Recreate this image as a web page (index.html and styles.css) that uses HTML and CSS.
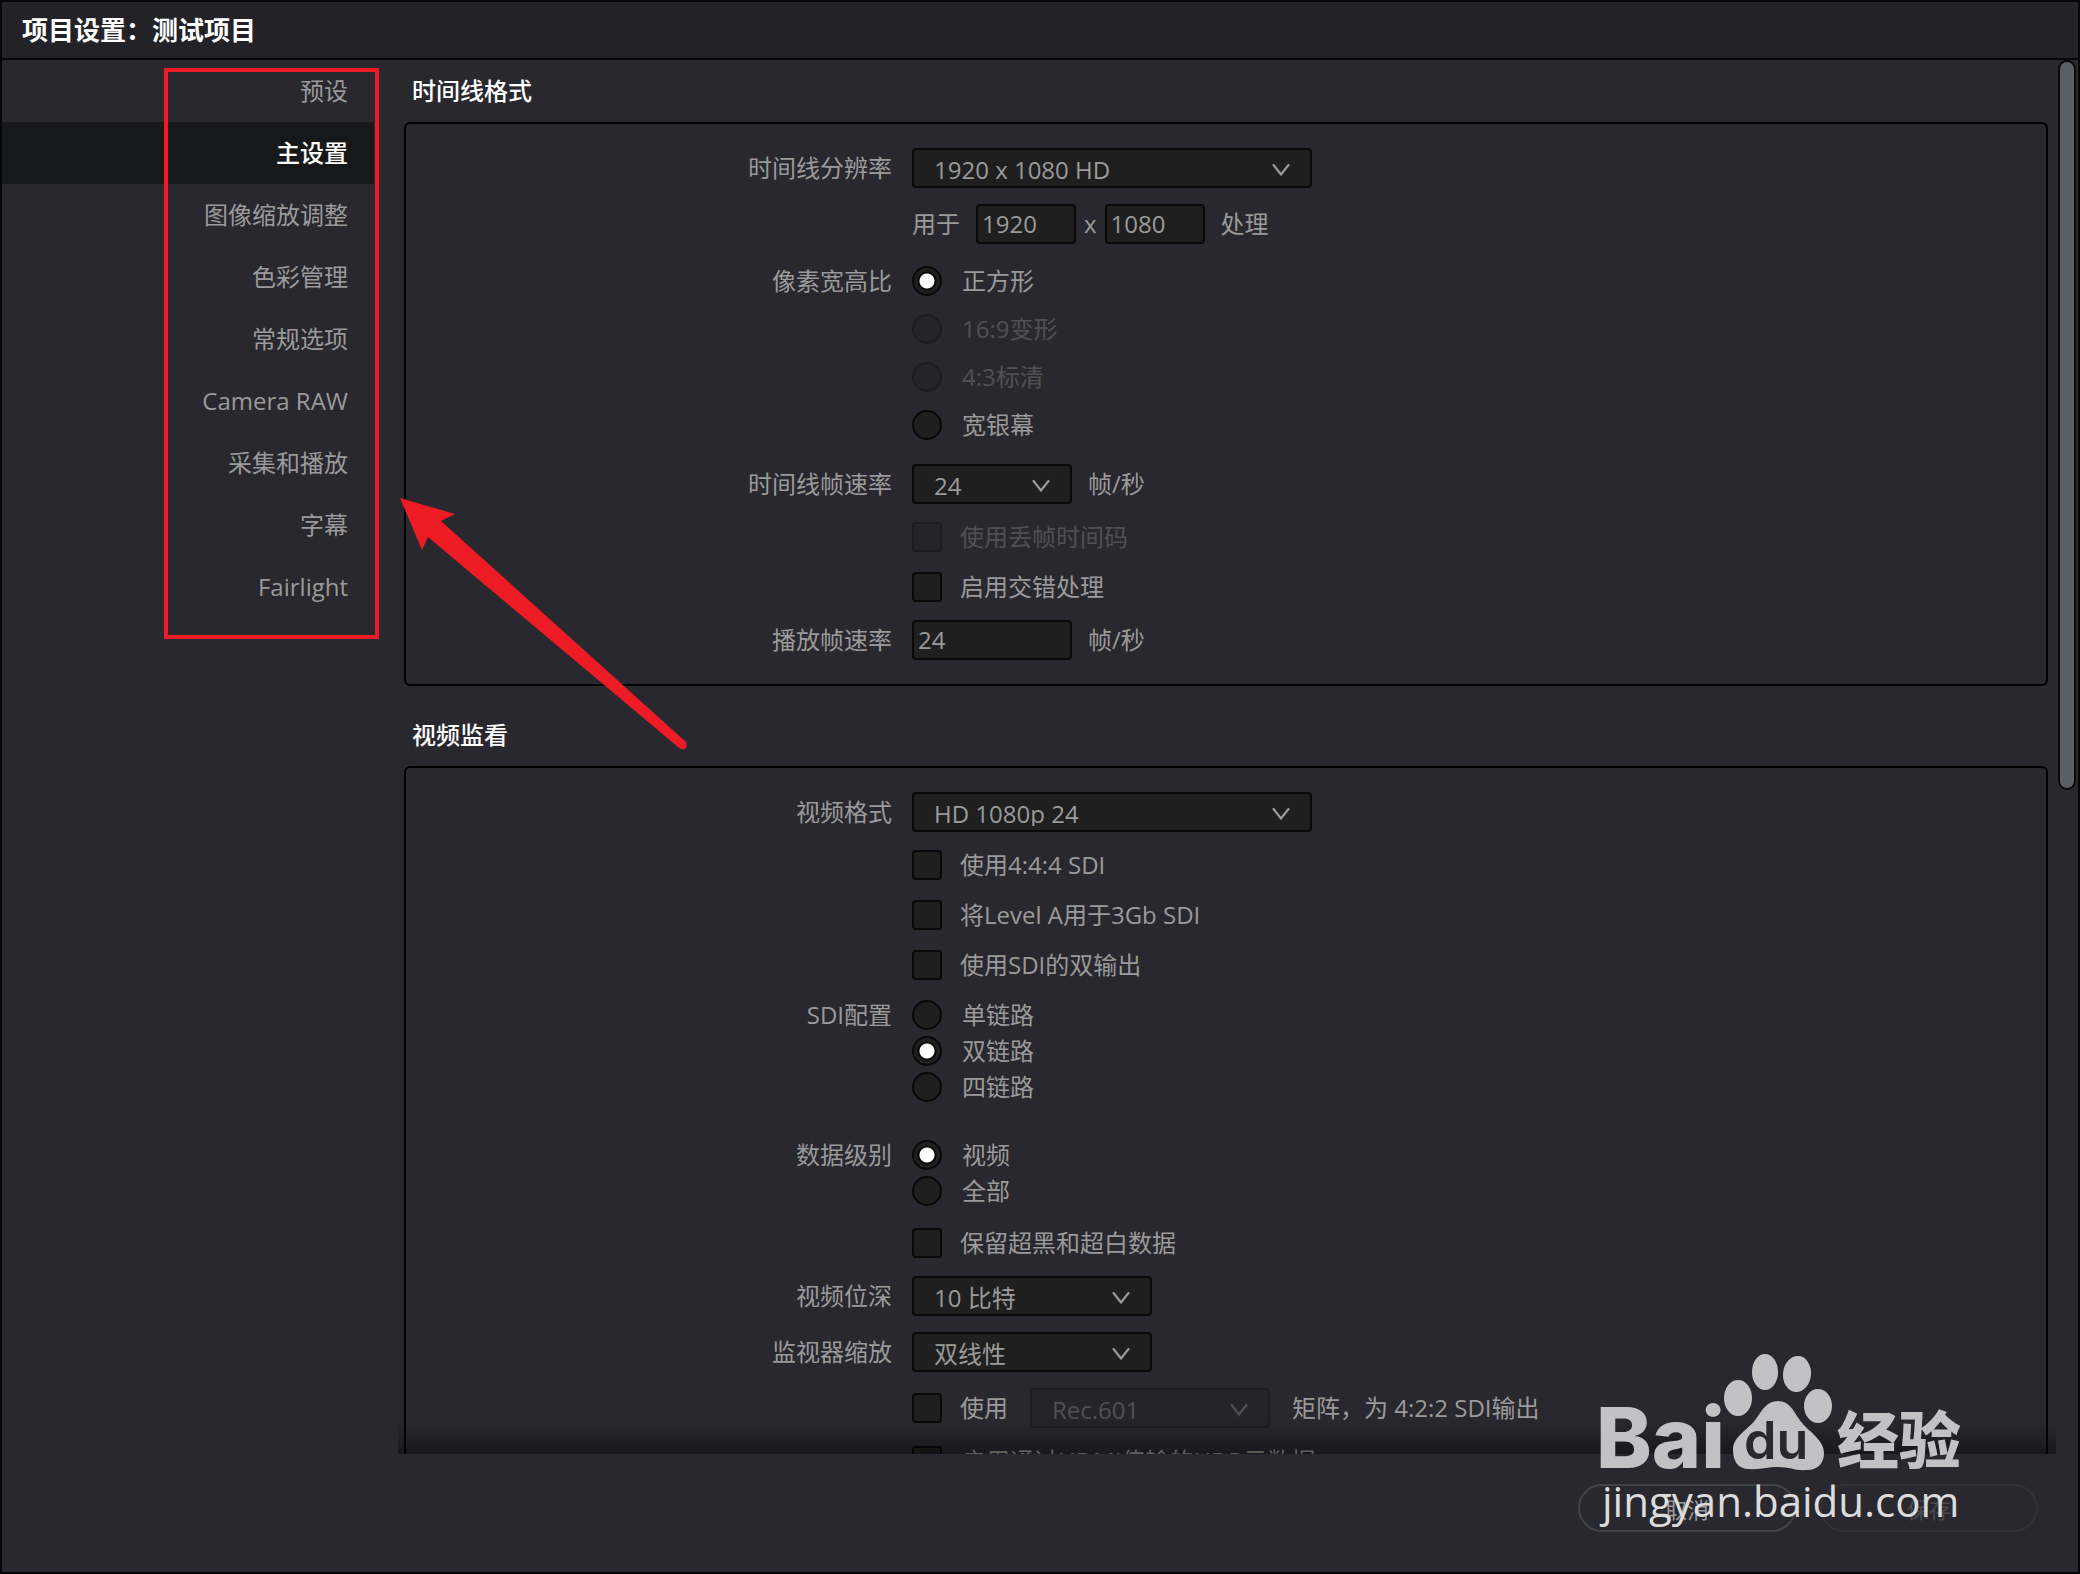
FILE: index.html
```html
<!DOCTYPE html>
<html lang="zh-CN">
<head>
  <meta charset="UTF-8" />
  <meta name="viewport" content="width=device-width, initial-scale=1.0"/>
  <title>项目设置：测试项目</title>
  <link rel="stylesheet" href="styles.css">
</head>
<body>
<svg class="defs" aria-hidden="true">
  <symbol id="chevron" viewBox="0 0 18 14"><path d="M1.5 2 L9 11.5 L16.5 2" fill="none" stroke="currentColor" stroke-width="2.2" stroke-linecap="round"/></symbol>
</svg>
<div class="window">
  <header class="titlebar"><h1>项目设置：测试项目</h1></header>

  <div class="main">
    <nav class="sidebar">
      <a href="#">预设</a>
      <a href="#" class="active">主设置</a>
      <a href="#">图像缩放调整</a>
      <a href="#">色彩管理</a>
      <a href="#">常规选项</a>
      <a href="#">Camera RAW</a>
      <a href="#">采集和播放</a>
      <a href="#">字幕</a>
      <a href="#">Fairlight</a>
      <div class="marker"></div>
    </nav>

    <form class="content">
      <h2>时间线格式</h2>
      <section class="panel">
        <div class="row">
          <label class="name" for="resolution">时间线分辨率</label>
          <div class="field">
            <span class="select wide"><select id="resolution"><option>1920 x 1080 HD</option></select><svg><use href="#chevron"/></svg></span>
          </div>
        </div>
        <div class="row tight">
          <div class="field size">
            <label for="ancho">用于</label>
            <input type="text" class="short" id="ancho" value="1920">
            <label for="alto">x</label>
            <input type="text" class="short" id="alto" value="1080">
            <span class="after">处理</span>
          </div>
        </div>
        <div class="row loose small">
          <span class="name" id="aspect">像素宽高比</span>
          <div class="options spaced" role="radiogroup" aria-labelledby="aspect">
            <label><input type="radio" name="aspect" checked>正方形</label>
            <label class="off"><input type="radio" name="aspect" disabled>16:9变形</label>
            <label class="off"><input type="radio" name="aspect" disabled>4:3标清</label>
            <label><input type="radio" name="aspect">宽银幕</label>
          </div>
        </div>
        <div class="row looser">
          <label class="name" for="fps">时间线帧速率</label>
          <div class="field">
            <span class="select"><select id="fps"><option>24</option></select><svg><use href="#chevron"/></svg></span>
            <span>帧/秒</span>
          </div>
        </div>
        <div class="row small">
          <div class="options checks">
            <label class="off"><input type="checkbox" disabled>使用丢帧时间码</label>
            <label><input type="checkbox">启用交错处理</label>
          </div>
        </div>
        <div class="row">
          <label class="name" for="playback">播放帧速率</label>
          <div class="field">
            <input type="text" id="playback" value="24">
            <span>帧/秒</span>
          </div>
        </div>
      </section>

      <h2>视频监看</h2>
      <section class="panel">
        <div class="row">
          <label class="name" for="format">视频格式</label>
          <div class="field">
            <span class="select wide"><select id="format"><option>HD 1080p 24</option></select><svg><use href="#chevron"/></svg></span>
          </div>
        </div>
        <div class="row small">
          <div class="options checks">
            <label><input type="checkbox">使用4:4:4 SDI</label>
            <label><input type="checkbox">将Level A用于3Gb SDI</label>
            <label><input type="checkbox">使用SDI的双输出</label>
          </div>
        </div>
        <div class="row medium small">
          <span class="name" id="sdi">SDI配置</span>
          <div class="options" role="radiogroup" aria-labelledby="sdi">
            <label><input type="radio" name="sdi">单链路</label>
            <label><input type="radio" name="sdi" checked>双链路</label>
            <label><input type="radio" name="sdi">四链路</label>
          </div>
        </div>
        <div class="row far small">
          <span class="name" id="levels">数据级别</span>
          <div class="options" role="radiogroup" aria-labelledby="levels">
            <label><input type="radio" name="levels" checked>视频</label>
            <label><input type="radio" name="levels">全部</label>
          </div>
        </div>
        <div class="row loose small">
          <div class="options checks">
            <label><input type="checkbox">保留超黑和超白数据</label>
          </div>
        </div>
        <div class="row">
          <label class="name" for="depth">视频位深</label>
          <div class="field">
            <span class="select medium"><select id="depth"><option>10 比特</option></select><svg><use href="#chevron"/></svg></span>
          </div>
        </div>
        <div class="row tight">
          <label class="name" for="scaling">监视器缩放</label>
          <div class="field">
            <span class="select medium"><select id="scaling"><option>双线性</option></select><svg><use href="#chevron"/></svg></span>
          </div>
        </div>
        <div class="row tight">
          <div class="field matrix">
            <div class="options checks"><label><input type="checkbox">使用</label></div>
            <span class="select medium off"><select aria-label="矩阵" disabled><option>Rec.601</option></select><svg><use href="#chevron"/></svg></span>
            <span>矩阵，为 4:2:2 SDI输出</span>
          </div>
        </div>
        <div class="row small">
          <div class="options">
            <label><input type="checkbox">启用通过HDMI传输的HDR元数据</label>
          </div>
        </div>
      </section>
      <div class="fade"></div>
    </form>

    <div class="scrollbar"><div class="thumb"></div></div>
  </div>

  <footer class="actions">
    <button type="button">取消</button>
    <button type="button" disabled>保存</button>
  </footer>

  <!-- flecha -->
  <svg class="arrow" viewBox="0 0 290 254" aria-hidden="true">
    <path d="M2 1 L57 17 L43 24 L288 245 Q290 249 287 252 Q283 253 280 250 L30 40 L24 53 Z" fill="#ed1c24"/>
  </svg>

  <!-- marca de agua -->
  <svg class="watermark" viewBox="0 0 380 190" role="img" aria-label="Baidu经验">
    <g fill="#c2c2c4">
      <ellipse cx="148" cy="48" rx="14" ry="18"/>
      <ellipse cx="175" cy="22" rx="13" ry="18"/>
      <ellipse cx="207" cy="24" rx="14" ry="18" transform="rotate(6 207 24)"/>
      <ellipse cx="228" cy="56" rx="14" ry="17"/>
      <path d="M188 51 C199 51 203 60 209 69 C217 81 234 89 234 103 C234 114 227 120 217 120 C206 121 200 117 188 117 C176 117 171 120 159 119 C148 119 143 111 143 100 C143 86 158 80 166 69 C172 60 177 51 188 51 Z"/>
      <text class="brand" x="6" y="118">Bai</text>
      <text class="brand-cn" x="247" y="114">经验</text>
    </g>
    <text class="brand-du" x="154" y="109">du</text>
    <text class="site" x="12" y="167">jingyan.baidu.com</text>
  </svg>
</div>
</body>
</html>
```
FILE: styles.css
```css
* {
  box-sizing: border-box;
}
body {
  margin: 0;
  background: #29282e;
  color: #9a9a9a;
  font-family: "Open Sans", "Noto Sans CJK SC", sans-serif;
  font-size: 24px;
}
.defs {
  display: none;
}
.window {
  position: relative;
  display: flex;
  flex-direction: column;
  height: 100vh;
  border: 2px solid #060606;
  overflow: hidden;
}
.titlebar {
  padding-left: 20px;
  background: #232227;
  border-bottom: 2px solid #060606;
}
h1 {
  margin: 0;
  color: #fff;
  font-size: 26px;
  line-height: 56px;
}
.main {
  display: flex;
  flex: 1;
  min-height: 0;
}

/* menu lateral */
.sidebar {
  position: relative;
  width: 372px;
}
.sidebar a {
  display: block;
  padding-right: 26px;
  color: #9a9a9a;
  line-height: 62px;
  text-align: right;
  text-decoration: none;
}
.sidebar a.active {
  background: #17181a;
  color: #fff;
  font-weight: 500;
}
.marker {
  position: absolute;
  top: 8px;
  left: 162px;
  width: 215px;
  height: 571px;
  border: 4px solid #ed1c24;
}

/* contenido */
.content {
  position: relative;
  flex: 1;
  padding: 0 10px 0 30px;
  overflow: hidden;
}
h2 {
  margin: 0;
  padding-left: 8px;
  color: #fff;
  font-size: 24px;
  font-weight: 500;
  line-height: 62px;
}
.panel + h2 {
  padding-top: 18px;
}
.panel {
  padding: 24px 0;
  border: 2px solid #000;
  border-radius: 6px;
}
.row {
  display: grid;
  grid-template-columns: 486px 1fr;
  column-gap: 20px;
  line-height: 40px;
}
.row + .row {
  margin-top: 18px;
}
.row.tight {
  margin-top: 16px;
}
.row.medium {
  margin-top: 20px;
}
.row.loose {
  margin-top: 22px;
}
.row.looser {
  margin-top: 24px;
}
.row.far {
  margin-top: 38px;
}
.row.small {
  line-height: 30px;
}
.name {
  text-align: right;
}
.field, .options {
  grid-column: 2;
}
.field {
  display: flex;
  align-items: center;
  gap: 16px;
}
.field.size {
  gap: 8px;
}
.field.size .after, .field.size label + input:first-of-type {
  margin-left: 8px;
}
.field.matrix {
  gap: 22px;
}
.options {
  display: flex;
  flex-direction: column;
  align-items: flex-start;
  gap: 6px;
}
.options.spaced {
  gap: 18px;
}
.options.checks {
  gap: 20px;
}
.options label {
  display: flex;
  align-items: center;
  gap: 20px;
  line-height: 30px;
}
.options.checks label {
  gap: 18px;
}
.off {
  opacity: 0.35;
}

/* controles */
input, select {
  appearance: none;
  margin: 0;
  background: #1f1f1f;
  border: 2px solid #080808;
  border-radius: 4px;
  color: #9a9a9a;
  font: inherit;
}
input[type="text"] {
  width: 160px;
  height: 40px;
  padding: 0 4px;
}
input.short {
  width: 100px;
}
input[type="checkbox"], input[type="radio"] {
  width: 30px;
  height: 30px;
}
input[type="radio"] {
  border-radius: 50%;
}
input[type="radio"]:checked {
  background: radial-gradient(circle, #fff 7px, #080808 8px, #080808 9px, #1f1f1f 10px);
}
input[type="checkbox"]:checked {
  background: #9a9a9a;
}
.select {
  display: grid;
  align-items: center;
  width: 160px;
}
.select.medium {
  width: 240px;
}
.select.wide {
  width: 400px;
}
.select select, .select svg {
  grid-area: 1 / 1;
}
.select select {
  width: 100%;
  height: 40px;
  padding: 0 20px 4px;
  opacity: 1;
}
.select svg {
  justify-self: end;
  width: 18px;
  height: 14px;
  margin: 4px 22px 0 0;
  pointer-events: none;
}
.fade {
  position: absolute;
  right: 2px;
  bottom: 0;
  left: 24px;
  height: 34px;
  background: linear-gradient(rgba(0,0,0,0), rgba(0,0,0,0.4));
  pointer-events: none;
}
.scrollbar {
  width: 20px;
}
.thumb {
  width: 18px;
  height: 730px;
  max-height: 100%;
  background: #5b5e67;
  border: 2px solid #080808;
  border-radius: 9px;
}

/* botones */
.actions {
  display: flex;
  justify-content: flex-end;
  gap: 24px;
  padding: 30px 40px 40px;
}
button {
  width: 218px;
  height: 48px;
  background: none;
  border: 2px solid #41444a;
  border-radius: 24px;
  color: #9a9a9a;
  font: inherit;
  font-size: 22px;
}
button:disabled {
  border-color: #313238;
  color: #4a4a4e;
}

/* capas encima de la ventana */
.arrow {
  position: absolute;
  top: 495px;
  left: 396px;
  width: 290px;
  pointer-events: none;
}
.watermark {
  position: absolute;
  right: 108px;
  bottom: 32px;
  width: 380px;
  pointer-events: none;
}
.brand {
  font: 800 84px Inter, sans-serif;
}
.brand-cn {
  font: 900 62px "Noto Sans CJK SC", sans-serif;
}
.brand-du {
  fill: #29282e;
  font: 600 52px Inter, sans-serif;
}
.site {
  fill: #dcdcdc;
  font: 500 42px "Open Sans", sans-serif;
}
```
